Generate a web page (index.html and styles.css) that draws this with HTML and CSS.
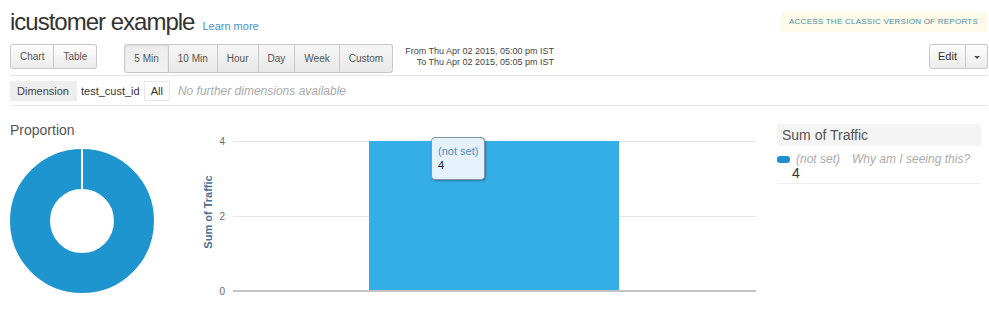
FILE: index.html
```html
<!DOCTYPE html>
<html lang="en">
<head>
    <meta charset="UTF-8">
    <meta name="viewport" content="width=device-width, initial-scale=1.0">
    <title>icustomer example</title>
    <link rel="stylesheet" href="styles.css">
</head>
<body>
<div class="page">
    <div class="header">
        <div class="title">
            <h1>icustomer example</h1>
            <a class="learn" href="#">Learn more</a>
        </div>
        <div class="classic">ACCESS THE CLASSIC VERSION OF REPORTS</div>
    </div>

    <div class="toolbar">
        <div class="btn-group small">
            <button class="btn">Chart</button>
            <button class="btn">Table</button>
        </div>
        <div class="btn-group range">
            <button class="btn active">5 Min</button>
            <button class="btn">10 Min</button>
            <button class="btn">Hour</button>
            <button class="btn">Day</button>
            <button class="btn">Week</button>
            <button class="btn">Custom</button>
        </div>
        <div class="daterange">
            <div>From Thu Apr 02 2015, 05:00 pm IST</div>
            <div>To Thu Apr 02 2015, 05:05 pm IST</div>
        </div>
        <div class="btn-group small edit">
            <button class="btn">Edit</button>
            <button class="btn caret-btn"><span class="caret"></span></button>
        </div>
    </div>

    <div class="dims">
        <span class="dim-label">Dimension</span>
        <span class="dim-name">test_cust_id</span>
        <span class="dim-all">All</span>
        <span class="dim-none">No further dimensions available</span>
    </div>

    <div class="content">
        <div class="proportion">
            <h2>Proportion</h2>
            <svg class="donut" width="144" height="144" viewBox="0 0 144 144">
                <circle cx="72" cy="72" r="52" fill="none" stroke="#1f95d0" stroke-width="40"/>
                <rect x="71" y="0" width="2" height="40" fill="#fff"/>
            </svg>
        </div>

        <div class="chart">
            <svg width="580" height="190" viewBox="0 0 580 190">
                <line x1="43" y1="21.5" x2="566" y2="21.5" stroke="#e6e6e6"/>
                <line x1="43" y1="96.5" x2="566" y2="96.5" stroke="#e6e6e6"/>
                <rect x="179" y="21" width="250" height="150" fill="#35ade7"/>
                <line x1="43" y1="171" x2="566" y2="171" stroke="#c4c4c4" stroke-width="2"/>
                <g class="tick">
                    <text x="35" y="25">4</text>
                    <text x="35" y="100">2</text>
                    <text x="35" y="175">0</text>
                </g>
                <text class="axis-title" transform="translate(22 92) rotate(-90)">Sum of Traffic</text>
            </svg>
            <div class="tooltip">
                <div class="tip-name">(not set)</div>
                <div class="tip-value">4</div>
            </div>
        </div>

        <div class="legend">
            <div class="legend-head">Sum of Traffic</div>
            <div class="legend-row">
                <div class="legend-line">
                    <span class="swatch"></span>
                    <span class="legend-name">(not set)</span>
                    <span class="legend-why">Why am I seeing this?</span>
                </div>
                <div class="legend-value">4</div>
            </div>
        </div>
    </div>
</div>
</body>
</html>
```

FILE: styles.css
```css
body {
    margin: 0;
    font-family: "Liberation Sans", Arial, sans-serif;
    color: #333;
    background: #fff;
}
.page {
    padding: 0 1px 0 10px;
}

/* header */
.header {
    display: flex;
    justify-content: space-between;
    align-items: flex-start;
}
.title {
    display: flex;
    align-items: baseline;
}
h1 {
    margin: 8px 0 0;
    font-size: 24px;
    line-height: 28px;
    letter-spacing: -1px;
    font-weight: normal;
    color: #333;
}
.learn {
    margin-left: 8px;
    font-size: 11px;
    color: #4a8fc7;
    text-decoration: none;
}
.classic {
    margin: 12px 1px 0 0;
    height: 20px;
    line-height: 20px;
    padding: 0 9px 0 8px;
    background: #fefce9;
    color: #4a8aa6;
    font-size: 8px;
    letter-spacing: 0.25px;
}

/* toolbar */
.toolbar {
    display: flex;
    align-items: flex-start;
    margin-top: 8px;
    padding-bottom: 2px;
    border-bottom: 1px solid #e6e6e6;
}
.btn-group {
    display: flex;
}
.btn {
    font-family: inherit;
    font-size: 10px;
    color: #555;
    background: linear-gradient(#fdfdfd, #ececec);
    border: 1px solid #c8c8c8;
    border-left-width: 0;
    padding: 0 9px;
    margin: 0;
    height: 25px;
    line-height: 21px;
}
.btn:first-child {
    border-left-width: 1px;
    border-radius: 3px 0 0 3px;
}
.btn:last-child {
    border-radius: 0 3px 3px 0;
}
.range {
    margin-left: 27px;
}
.range .btn {
    height: 29px;
    line-height: 27px;
    padding: 0 9px;
    background: linear-gradient(#f6f6f6, #e8e8e8);
}
.range .btn.active {
    background: linear-gradient(#ececec, #f2f2f2);
    box-shadow: inset 0 1px 2px rgba(0, 0, 0, 0.08);
}
.daterange {
    margin: 2px 0 0 12px;
    font-size: 9px;
    line-height: 11px;
    text-align: right;
    color: #444;
}
.edit {
    margin-left: auto;
}
.edit .btn {
    font-size: 11px;
    color: #333;
    padding: 0 8px;
}
.edit .caret-btn {
    width: 22px;
    padding: 0;
}
.caret {
    display: inline-block;
    border-top: 3px solid #555;
    border-left: 3px solid transparent;
    border-right: 3px solid transparent;
    vertical-align: middle;
}

/* dimension row */
.dims {
    display: flex;
    align-items: center;
    padding: 5px 0 4px;
    border-bottom: 1px solid #e6e6e6;
    font-size: 11px;
}
.dim-label {
    background: #eee;
    color: #444;
    height: 20px;
    line-height: 20px;
    padding: 0 8px 0 7px;
}
.dim-name {
    margin-left: 4px;
    color: #333;
}
.dim-all {
    margin-left: 4px;
    height: 20px;
    line-height: 18px;
    padding: 0 6px;
    border: 1px solid #e8e8e8;
    box-sizing: border-box;
}
.dim-none {
    margin-left: 8px;
    font-size: 12px;
    font-style: italic;
    color: #aaa;
}

/* content */
.content {
    display: flex;
    align-items: flex-start;
    padding-top: 16px;
}
.proportion {
    width: 180px;
}
.proportion h2 {
    margin: 0;
    font-size: 14px;
    line-height: 16px;
    font-weight: normal;
    color: #555;
}
.donut {
    display: block;
    margin-top: 11px;
}
.chart {
    position: relative;
    width: 580px;
    margin-top: -2px;
}
.chart svg {
    display: block;
}
.tick text {
    font-family: "Liberation Sans", Arial, sans-serif;
    font-size: 10px;
    fill: #666;
    text-anchor: end;
}
.axis-title {
    font-family: "Liberation Sans", Arial, sans-serif;
    font-size: 11px;
    font-weight: bold;
    fill: #4d6e92;
    text-anchor: middle;
}
.tooltip {
    position: absolute;
    left: 241px;
    top: 17px;
    width: 54px;
    height: 43px;
    box-sizing: border-box;
    padding: 6px 0 0 6px;
    background: #e6f2fb;
    border: 1px solid #8494a6;
    border-radius: 4px;
    box-shadow: 1px 1px 2px rgba(0, 0, 0, 0.3);
    font-size: 11px;
    line-height: 14px;
}
.tip-name {
    color: #4b8dbf;
}
.tip-value {
    color: #222;
}

/* legend */
.legend {
    margin: 2px 7px 0 auto;
    width: 204px;
}
.legend-head {
    height: 22px;
    line-height: 22px;
    padding-left: 5px;
    background: #f4f4f4;
    font-size: 14px;
    color: #555;
}
.legend-row {
    padding: 6px 0 3px;
    border-bottom: 1px solid #eee;
}
.legend-line {
    display: flex;
    align-items: center;
    font-size: 12px;
    font-style: italic;
    color: #aaa;
    line-height: 14px;
}
.swatch {
    width: 13px;
    height: 7px;
    border-radius: 3px;
    background: #1f8fcf;
    margin-right: 6px;
}
.legend-why {
    margin-left: 12px;
}
.legend-value {
    margin-left: 15px;
    font-size: 14px;
    line-height: 14px;
    color: #333;
}
```
